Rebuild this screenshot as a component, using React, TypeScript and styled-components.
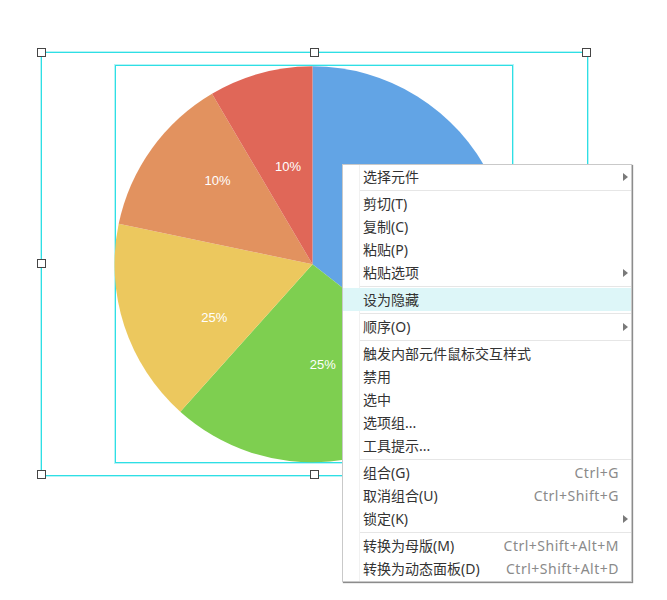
import React from 'react'
import styled, { createGlobalStyle } from 'styled-components'

const GlobalStyle = createGlobalStyle`
  html, body {
    margin: 0;
    padding: 0;
    background: #fff;
  }
`

const CYAN = '#2edfe5'
const CYAN_SOFT = 'rgba(46, 223, 229, 0.35)'

const Canvas = styled.div`
  position: relative;
  width: 667px;
  height: 600px;
  overflow: hidden;
  background: #fff;
  font-family: 'Liberation Sans', Arial, sans-serif;
`

const SelectionFrame = styled.div`
  position: absolute;
  left: 41px;
  top: 52px;
  width: 547px;
  height: 424px;
  box-sizing: border-box;
  border: 1px solid ${CYAN};
  box-shadow: 0 0 0 1px ${CYAN_SOFT};
`

const Handle = styled.span<{ $x: number; $y: number }>`
  position: absolute;
  left: ${({ $x }) => $x}%;
  top: ${({ $y }) => $y}%;
  width: 9px;
  height: 9px;
  box-sizing: border-box;
  margin: -5px 0 0 -5px;
  background: #fff;
  border: 1.5px solid #454545;
`

const WidgetBox = styled.div`
  position: absolute;
  left: 115px;
  top: 65px;
  width: 398px;
  height: 398px;
  box-sizing: border-box;
  border: 1px solid ${CYAN};
  box-shadow: 0 0 0 1px ${CYAN_SOFT};
`

const PieSvg = styled.svg`
  display: block;
  overflow: visible;

  text {
    font-family: 'Liberation Sans', Arial, sans-serif;
    font-size: 13px;
    fill: #fff;
  }
`

const Menu = styled.div`
  position: absolute;
  left: 342px;
  top: 164px;
  width: 290px;
  box-sizing: border-box;
  padding: 0 0 1px;
  border: 1px solid #c9c9c9;
  box-shadow: 1px 1px 1px rgba(0, 0, 0, 0.45);
  background: linear-gradient(to right, #fff 16px, #f1f1f1 16px, #f1f1f1 17px, #fff 17px);
  font-family: 'Noto Sans', 'Noto Sans CJK SC', sans-serif;
  font-size: 14px;
  color: #333;
`

const Row = styled.div<{ $active?: boolean }>`
  display: grid;
  grid-template-columns: 1fr auto 12px;
  align-items: center;
  height: 23px;
  padding-left: 20px;
  background: ${({ $active }) => ($active ? '#ddf6f8' : 'transparent')};
  white-space: nowrap;
`

const Label = styled.span`
  line-height: 23px;
`

const Shortcut = styled.span`
  color: #8a8a8a;
  letter-spacing: 0.5px;
`

const Arrow = styled.span`
  justify-self: center;
  width: 0;
  height: 0;
  border-left: 5px solid #7a7a7a;
  border-top: 4px solid transparent;
  border-bottom: 4px solid transparent;
`

const Separator = styled.div`
  height: 4px;
  display: flex;
  align-items: center;
  padding-left: 17px;

  &::after {
    content: '';
    flex: 1;
    height: 1px;
    background: #e6e6e6;
  }
`

type Slice = { from: number; to: number; color: string }

const CX = 196.5
const CY = 198.3
const R = 198

const slices: Slice[] = [
  { from: 0, to: 128, color: '#62a4e5' },
  { from: 128, to: 221.9, color: '#7ecf50' },
  { from: 221.9, to: 281.8, color: '#ecc85e' },
  { from: 281.8, to: 329.5, color: '#e2925f' },
  { from: 329.5, to: 360, color: '#e06758' },
]

const labels = [
  { x: 172, y: 100, text: '10%' },
  { x: 101.5, y: 114.5, text: '10%' },
  { x: 98.3, y: 251.5, text: '25%' },
  { x: 206.7, y: 298.5, text: '25%' },
]

const point = (deg: number) => {
  const a = (deg * Math.PI) / 180
  return `${CX + R * Math.sin(a)} ${CY - R * Math.cos(a)}`
}

const slicePath = ({ from, to }: Slice) =>
  `M ${CX} ${CY} L ${point(from)} A ${R} ${R} 0 ${to - from > 180 ? 1 : 0} 1 ${point(to)} Z`

type MenuEntry =
  | { sep: true }
  | { sep?: false; label: string; shortcut?: string; sub?: boolean; active?: boolean }

const menu: MenuEntry[] = [
  { label: '选择元件', sub: true },
  { sep: true },
  { label: '剪切(T)' },
  { label: '复制(C)' },
  { label: '粘贴(P)' },
  { label: '粘贴选项', sub: true },
  { sep: true },
  { label: '设为隐藏', active: true },
  { sep: true },
  { label: '顺序(O)', sub: true },
  { sep: true },
  { label: '触发内部元件鼠标交互样式' },
  { label: '禁用' },
  { label: '选中' },
  { label: '选项组...' },
  { label: '工具提示...' },
  { sep: true },
  { label: '组合(G)', shortcut: 'Ctrl+G' },
  { label: '取消组合(U)', shortcut: 'Ctrl+Shift+G' },
  { label: '锁定(K)', sub: true },
  { sep: true },
  { label: '转换为母版(M)', shortcut: 'Ctrl+Shift+Alt+M' },
  { label: '转换为动态面板(D)', shortcut: 'Ctrl+Shift+Alt+D' },
]

const PieChart = () => (
  <PieSvg width={396} height={396}>
    {slices.map((s, i) => (
      <path key={i} d={slicePath(s)} fill={s.color} />
    ))}
    {labels.map((l, i) => (
      <text key={i} x={l.x} y={l.y} textAnchor="middle" dominantBaseline="central">
        {l.text}
      </text>
    ))}
  </PieSvg>
)

const ContextMenu = () => (
  <Menu>
    {menu.map((m, i) =>
      m.sep ? (
        <Separator key={i} />
      ) : (
        <Row key={i} $active={m.active}>
          <Label>{m.label}</Label>
          <Shortcut>{m.shortcut}</Shortcut>
          {m.sub ? <Arrow /> : <span />}
        </Row>
      ),
    )}
  </Menu>
)

const handles = [
  [0, 0], [50, 0], [100, 0],
  [0, 50], [100, 50],
  [0, 100], [50, 100], [100, 100],
]

export default function App() {
  return (
    <>
      <GlobalStyle />
      <Canvas>
        <WidgetBox>
          <PieChart />
        </WidgetBox>
        <SelectionFrame>
          {handles.map(([x, y], i) => (
            <Handle key={i} $x={x} $y={y} />
          ))}
        </SelectionFrame>
        <ContextMenu />
      </Canvas>
    </>
  )
}
